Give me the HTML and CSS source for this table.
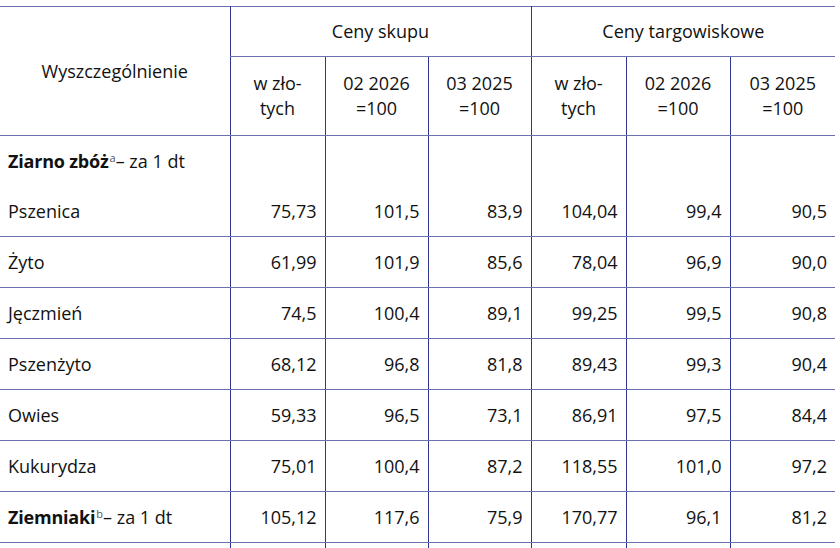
FILE: index.html
```html
<!DOCTYPE html>
<html lang="pl">
<head>
<meta charset="utf-8">
<title>Ceny produktów rolnych</title>
<link rel="stylesheet" href="styles.css">
</head>
<body>
<table class="prices">
  <colgroup>
    <col class="c-name">
    <col class="c-a">
    <col class="c-b">
    <col class="c-b">
    <col class="c-a">
    <col class="c-c">
    <col class="c-d">
  </colgroup>
  <thead>
    <tr class="h1">
      <th rowspan="2" class="first">Wyszczególnienie</th>
      <th colspan="3">Ceny skupu</th>
      <th colspan="3">Ceny targowiskowe</th>
    </tr>
    <tr class="h2">
      <th>w zło-<br>tych</th>
      <th>02 2026<br>=100</th>
      <th>03 2025<br>=100</th>
      <th>w zło-<br>tych</th>
      <th>02 2026<br>=100</th>
      <th>03 2025<br>=100</th>
    </tr>
  </thead>
  <tbody>
    <tr class="group">
      <td class="first"><b>Ziarno zbóż</b><sup>a</sup>– za 1 dt</td>
      <td></td><td></td><td></td><td></td><td></td><td></td>
    </tr>
    <tr class="after-group">
      <td class="first">Pszenica</td>
      <td>75,73</td><td>101,5</td><td>83,9</td><td>104,04</td><td>99,4</td><td>90,5</td>
    </tr>
    <tr>
      <td class="first">Żyto</td>
      <td>61,99</td><td>101,9</td><td>85,6</td><td>78,04</td><td>96,9</td><td>90,0</td>
    </tr>
    <tr>
      <td class="first">Jęczmień</td>
      <td>74,5</td><td>100,4</td><td>89,1</td><td>99,25</td><td>99,5</td><td>90,8</td>
    </tr>
    <tr>
      <td class="first">Pszenżyto</td>
      <td>68,12</td><td>96,8</td><td>81,8</td><td>89,43</td><td>99,3</td><td>90,4</td>
    </tr>
    <tr>
      <td class="first">Owies</td>
      <td>59,33</td><td>96,5</td><td>73,1</td><td>86,91</td><td>97,5</td><td>84,4</td>
    </tr>
    <tr>
      <td class="first">Kukurydza</td>
      <td>75,01</td><td>100,4</td><td>87,2</td><td>118,55</td><td>101,0</td><td>97,2</td>
    </tr>
    <tr>
      <td class="first"><b>Ziemniaki</b><sup>b</sup>– za 1 dt</td>
      <td>105,12</td><td>117,6</td><td>75,9</td><td>170,77</td><td>96,1</td><td>81,2</td>
    </tr>
    <tr>
      <td class="first">&nbsp;</td>
      <td></td><td></td><td></td><td></td><td></td><td></td>
    </tr>
  </tbody>
</table>
</body>
</html>
```

FILE: styles.css
```css
html, body {
  margin: 0;
  padding: 0;
  background: #ffffff;
  overflow: hidden;
}

body {
  padding-top: 6px;
  font-family: "Open Sans", "Noto Sans", "Liberation Sans", sans-serif;
  font-size: 18px;
  color: #111111;
}

.prices {
  width: 835px;
  table-layout: fixed;
  border-collapse: collapse;
  border-top: 1px solid #6a6fae;
}

.c-name { width: 230px; }
.c-a { width: 95px; }
.c-b { width: 103px; }
.c-c { width: 104px; }
.c-d { width: 105px; }

.prices th,
.prices td {
  border-left: 1px solid #2f3590;
  border-bottom: 1px solid #6a6fae;
  padding: 0 8px;
  line-height: 25px;
}

.prices th {
  font-weight: normal;
  text-align: center;
  vertical-align: middle;
}

.prices th.first,
.prices td.first {
  border-left: none;
}

.prices td.first {
  text-align: left;
  padding-left: 8px;
}

.h1 th { height: 49px; }
.h2 th { height: 78px; }

.prices td {
  height: 50px;
  text-align: right;
  vertical-align: middle;
  white-space: nowrap;
}

.prices tr.group td {
  border-bottom: none;
}

.prices b {
  font-weight: 700;
  letter-spacing: -0.2px;
}

.prices sup {
  font-size: 11px;
  line-height: 0;
  vertical-align: 6px;
  color: #555;
  margin-left: 1px;
}
```
